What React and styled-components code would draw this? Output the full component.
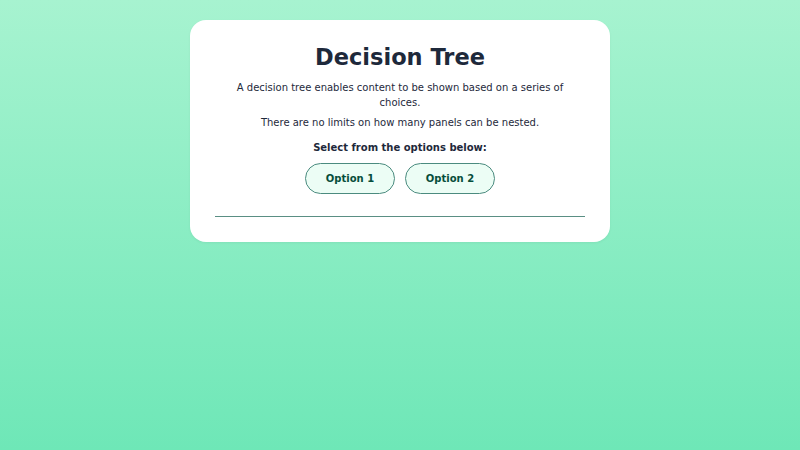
import React from "react";
import styled, { createGlobalStyle } from "styled-components";

const GlobalStyle = createGlobalStyle`
  html, body {
    margin: 0;
    padding: 0;
  }
  body {
    min-height: 100vh;
    background: linear-gradient(180deg, #a7f3d0 0%, #6ee7b7 100%);
    font-family: "DejaVu Sans", "Liberation Sans", sans-serif;
  }
`;

const Page = styled.div`
  min-height: 100vh;
  display: flex;
  justify-content: center;
  align-items: flex-start;
  padding-top: 20px;
  box-sizing: border-box;
`;

const Card = styled.div`
  width: 420px;
  box-sizing: border-box;
  background: #ffffff;
  border-radius: 16px;
  padding: 24px 25px 25px;
  display: flex;
  flex-direction: column;
  align-items: center;
  text-align: center;
  box-shadow: 0 1px 3px rgba(0, 0, 0, 0.05);
`;

const Title = styled.h1`
  margin: 0 0 9px;
  font-size: 22.5px;
  font-weight: 700;
  color: #1e293b;
  line-height: 27px;
`;

const Text = styled.p`
  margin: 0 0 5px;
  font-size: 10px;
  line-height: 15px;
  color: #1e293b;
  max-width: 340px;
`;

const Prompt = styled.p`
  margin: 5px 0 8px;
  font-size: 10px;
  line-height: 15px;
  font-weight: 700;
  color: #1e293b;
`;

const Options = styled.div`
  display: flex;
  gap: 10px;
`;

const OptionButton = styled.button`
  width: 90px;
  height: 31px;
  border-radius: 16px;
  border: 1px solid #4b8b7f;
  background: #ecfdf5;
  color: #064e3b;
  font-family: inherit;
  font-size: 10px;
  font-weight: 700;
  cursor: pointer;
`;

const Divider = styled.hr`
  align-self: stretch;
  margin: 22px 0 0;
  border: none;
  border-top: 1px solid #5a8f84;
`;

export default function App() {
  return (
    <>
      <GlobalStyle />
      <Page>
        <Card>
          <Title>Decision Tree</Title>
          <Text>
            A decision tree enables content to be shown based on a series of
            choices.
          </Text>
          <Text>There are no limits on how many panels can be nested.</Text>
          <Prompt>Select from the options below:</Prompt>
          <Options>
            <OptionButton>Option 1</OptionButton>
            <OptionButton>Option 2</OptionButton>
          </Options>
          <Divider />
        </Card>
      </Page>
    </>
  );
}
